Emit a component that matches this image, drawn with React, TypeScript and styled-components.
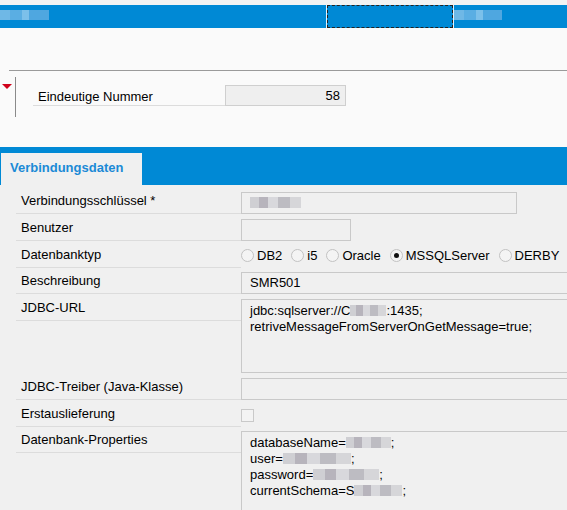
import React from 'react'
import styled, { createGlobalStyle } from 'styled-components'

const GlobalStyle = createGlobalStyle`
  html, body {
    margin: 0;
    padding: 0;
    background: #fafafa;
    overflow: hidden;
  }
  body {
    font-family: 'Liberation Sans', Arial, sans-serif;
    font-size: 13px;
    color: #000;
  }
`

const BLUE = '#0089d5'

const dbTypes = ['DB2', 'i5', 'Oracle', 'MSSQLServer', 'DERBY']

const App: React.FC = () => (
  <Page>
    <GlobalStyle />
    <TopStrip />
    <HeaderBar>
      <HeaderCell $width={327}>
        <Redacted $w={49} $tone="light" />
      </HeaderCell>
      <FocusCell />
      <HeaderCell $width={113}>
        <Redacted $w={48} $tone="light" />
      </HeaderCell>
    </HeaderBar>

    <UpperPanel>
      <Rule />
      <Group>
        <Toggle>
          <Triangle />
        </Toggle>
        <GroupBody>
          <IdRow>
            <IdLabel>Eindeutige Nummer</IdLabel>
            <IdInput>58</IdInput>
          </IdRow>
        </GroupBody>
      </Group>
    </UpperPanel>

    <TabBar>
      <Tab>Verbindungsdaten</Tab>
    </TabBar>

    <Form>
      <Row>
        <Label>Verbindungsschlüssel *</Label>
        <Field>
          <Input $width={276}>
            <Redacted $w={51} $tone="gray" />
          </Input>
        </Field>
      </Row>
      <Row>
        <Label>Benutzer</Label>
        <Field>
          <Input $width={110} />
        </Field>
      </Row>
      <Row>
        <Label>Datenbanktyp</Label>
        <Field>
          <RadioGroup>
            {dbTypes.map((t) => (
              <RadioOption key={t}>
                <RadioCircle $checked={t === 'MSSQLServer'} />
                {t}
              </RadioOption>
            ))}
            {/* next option is cut off by the window edge */}
            <RadioCircle $checked={false} />
          </RadioGroup>
        </Field>
      </Row>
      <Row>
        <Label>Beschreibung</Label>
        <Field>
          <Input $width={340}>SMR501</Input>
        </Field>
      </Row>
      <Row>
        <Label>JDBC-URL</Label>
        <Field>
          <TextArea $height={74}>
            <Line>
              jdbc:sqlserver://C<Redacted $w={36} $tone="gray" />:1435;
            </Line>
            <Line>retriveMessageFromServerOnGetMessage=true;</Line>
          </TextArea>
        </Field>
      </Row>
      <Row>
        <Label>JDBC-Treiber (Java-Klasse)</Label>
        <Field>
          <Input $width={340} />
        </Field>
      </Row>
      <Row>
        <Label>Erstauslieferung</Label>
        <Field>
          <Checkbox />
        </Field>
      </Row>
      <Row>
        <Label>Datenbank-Properties</Label>
        <Field>
          <TextArea $height={100}>
            <Line>
              databaseName=<Redacted $w={45} $tone="gray" />;
            </Line>
            <Line>
              user=<Redacted $w={68} $tone="gray" />;
            </Line>
            <Line>
              password=<Redacted $w={66} $tone="gray" />;
            </Line>
            <Line>
              currentSchema=S<Redacted $w={48} $tone="gray" />;
            </Line>
          </TextArea>
        </Field>
      </Row>
    </Form>
  </Page>
)

export default App

const Page = styled.div`
  width: 567px;
  height: 510px;
  overflow: hidden;
`

const TopStrip = styled.div`
  height: 5px;
  background: #f3f3f3;
`

const HeaderBar = styled.div`
  display: flex;
  height: 23px;
  background: ${BLUE};
`

const HeaderCell = styled.div<{ $width: number }>`
  width: ${(p) => p.$width}px;
  padding-top: 5px;
  box-sizing: border-box;
  border-right: 1px solid #e8f2fa;
  &:last-child {
    border-right: none;
    flex: 1;
  }
`

const FocusCell = styled.div`
  width: 126px;
  box-sizing: border-box;
  border: 1px dashed #222;
  & + div {
    border-left: 1px solid #e8f2fa;
  }
`

const Redacted = styled.span<{ $w: number; $tone: 'light' | 'gray' }>`
  display: inline-block;
  width: ${(p) => p.$w}px;
  height: ${(p) => (p.$tone === 'light' ? 10 : 11)}px;
  vertical-align: ${(p) => (p.$tone === 'light' ? 'top' : '-1px')};
  background: ${(p) =>
    p.$tone === 'light'
      ? 'linear-gradient(90deg, #6fb8e6 0 20%, #5aaee3 20% 45%, #7cc0ea 45% 60%, #4fa7e0 60% 100%)'
      : 'linear-gradient(90deg, #cfcfd3 0 18%, #b7b4bc 18% 35%, #d8d8dc 35% 55%, #bdbcc2 55% 78%, #d6d6d9 78% 100%)'};
`

const UpperPanel = styled.div`
  height: 119px;
  padding-top: 42px;
  box-sizing: border-box;
  background: #fafafa;
`

const Rule = styled.div`
  margin-left: 9px;
  border-top: 1px solid #9a9a9a;
`

const Group = styled.div`
  display: flex;
  margin-top: 6px;
`

const Toggle = styled.div`
  width: 15px;
  padding: 7px 0 0 2px;
  box-sizing: border-box;
`

const Triangle = styled.div`
  width: 0;
  height: 0;
  border-left: 5px solid transparent;
  border-right: 5px solid transparent;
  border-top: 5px solid #d0021b;
`

const GroupBody = styled.div`
  height: 40px;
  border-left: 1px solid #8a8a8a;
  padding: 8px 0 0 17px;
  box-sizing: border-box;
`

const IdRow = styled.div`
  display: flex;
  align-items: flex-end;
`

const IdLabel = styled.div`
  width: 192px;
  height: 21px;
  padding-left: 5px;
  line-height: 23px;
  box-sizing: border-box;
  border-bottom: 1px solid #dcdcdc;
`

const IdInput = styled.div`
  width: 121px;
  height: 21px;
  box-sizing: border-box;
  border: 1px solid #cfcfcf;
  background: #efefef;
  text-align: right;
  padding-right: 5px;
  line-height: 19px;
`

const TabBar = styled.div`
  height: 38px;
  background: ${BLUE};
  padding: 6px 0 0 1px;
  box-sizing: border-box;
`

const Tab = styled.div`
  width: 141px;
  height: 32px;
  background: #f0f0f0;
  color: #1b8ad6;
  font-weight: bold;
  font-size: 13px;
  padding-left: 9px;
  line-height: 29px;
  box-sizing: border-box;
`

const Form = styled.div`
  background: #f0f0f0;
  padding: 3px 0 0 16px;
  display: flex;
  flex-direction: column;
  height: 400px;
`

const Row = styled.div`
  display: grid;
  grid-template-columns: 225px 1fr;
  align-items: start;
`

const Label = styled.div`
  height: 26px;
  line-height: 25px;
  padding-left: 5px;
  box-sizing: border-box;
  border-bottom: 1px solid #dcdcdc;
  white-space: nowrap;
`

const Field = styled.div`
  padding: 4px 0 1px 0;
  white-space: nowrap;
`

const Input = styled.div<{ $width: number }>`
  width: ${(p) => p.$width}px;
  height: 22px;
  box-sizing: border-box;
  border: 1px solid #c9c9c9;
  padding-left: 8px;
  line-height: 20px;
  overflow: hidden;
`

const TextArea = styled.div<{ $height: number }>`
  width: 340px;
  height: ${(p) => p.$height}px;
  box-sizing: border-box;
  border: 1px solid #c9c9c9;
  padding: 3px 0 0 8px;
  line-height: 16px;
`

const Line = styled.div`
  white-space: nowrap;
`

const RadioGroup = styled.div`
  display: flex;
  gap: 9px;
  height: 18px;
  align-items: center;
`

const RadioOption = styled.label`
  display: flex;
  align-items: center;
  gap: 3px;
`

const RadioCircle = styled.span<{ $checked: boolean }>`
  flex: none;
  width: 13px;
  height: 13px;
  box-sizing: border-box;
  border-radius: 50%;
  border: 1px solid #c2c2c2;
  background: #f4f4f4;
  display: flex;
  align-items: center;
  justify-content: center;
  &::after {
    content: '';
    width: 5px;
    height: 5px;
    border-radius: 50%;
    background: #111;
    display: ${(p) => (p.$checked ? 'block' : 'none')};
  }
`

const Checkbox = styled.span`
  display: block;
  width: 13px;
  height: 13px;
  margin-top: 4px;
  box-sizing: border-box;
  border: 1px solid #c9c9c9;
  background: #f3f3f3;
`
